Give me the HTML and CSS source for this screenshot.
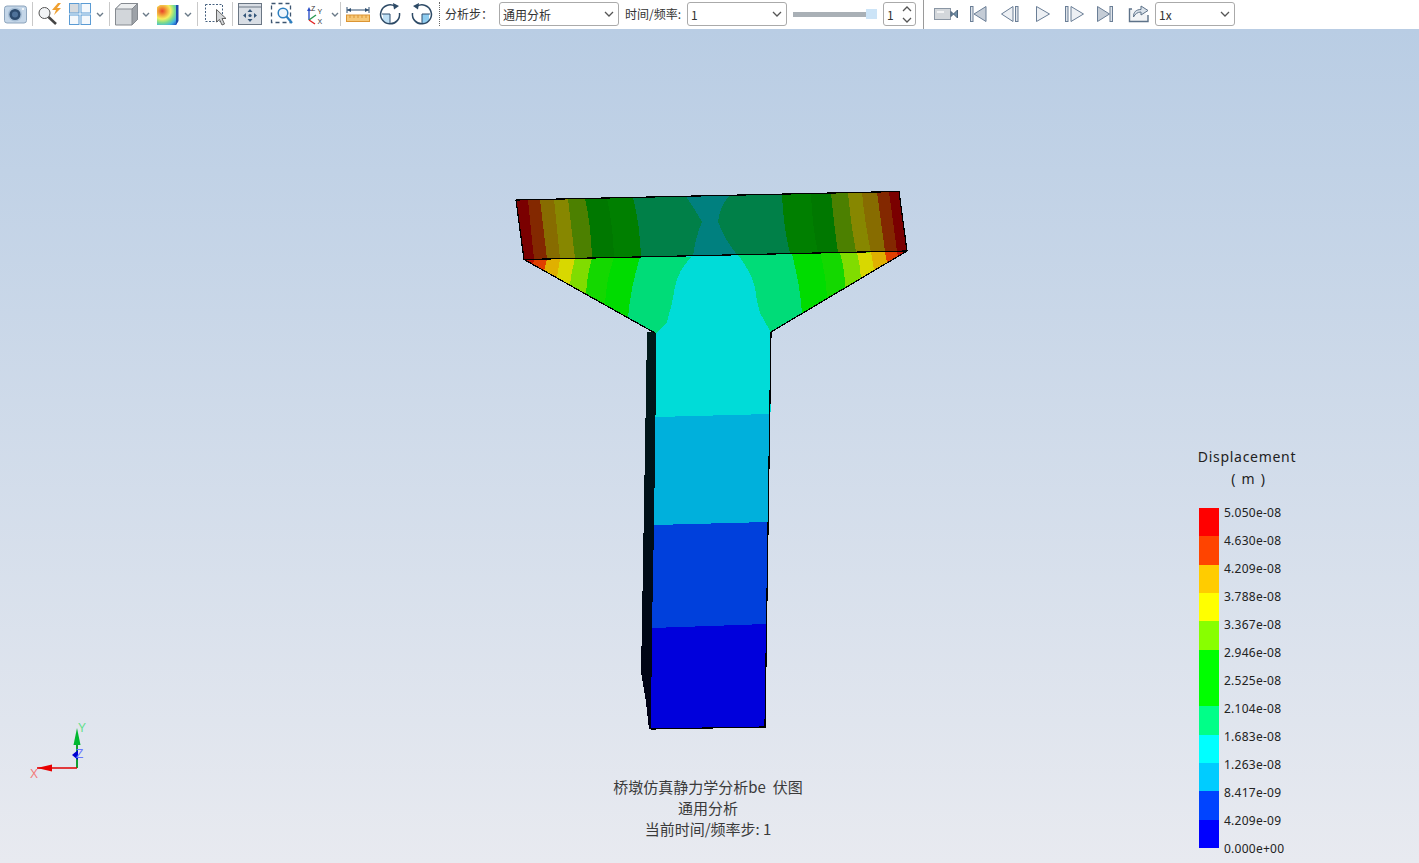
FILE: index.html
```html
<!DOCTYPE html>
<html lang="zh-CN">
<head>
    <meta charset="UTF-8">
    <title>桥墩仿真静力学分析</title>
    <link rel="stylesheet" href="styles.css">
</head>
<body>
    <div class="toolbar">
        <svg class="ico" viewBox="0 0 24 24"><rect x="1.5" y="4" width="22" height="17" rx="2.5" fill="#c4d6e8" stroke="#8ea5bd"/><circle cx="12" cy="12.5" r="7" fill="#a8bfd6"/><circle cx="12" cy="12.5" r="5.5" fill="#2c4a6c"/><circle cx="12" cy="12.5" r="3" fill="#4f7299"/><circle cx="20" cy="7" r="1" fill="#fff"/></svg>
        <div class="sep"></div>
        <svg class="ico" viewBox="0 0 24 24"><circle cx="6.5" cy="11" r="5.5" fill="#f2f4f6" stroke="#555"/><path d="M10.5 15L18 22" stroke="#444" stroke-width="2.5"/><path d="M20 1L14 8H18L16 13L23 6H19L23 1Z" fill="#f0a030"/></svg>
        <svg class="ico gap6" viewBox="0 0 24 24"><rect x="1.5" y="1.5" width="9.5" height="9.5" fill="#d6dade" stroke="#5a9bd4"/><rect x="13" y="1.5" width="9.5" height="9.5" fill="#f4f8fc" stroke="#5a9bd4"/><rect x="1.5" y="13" width="9.5" height="9.5" fill="#f4f8fc" stroke="#5a9bd4"/><rect x="13" y="13" width="9.5" height="9.5" fill="#f4f8fc" stroke="#5a9bd4"/></svg>
        <svg class="chev" viewBox="0 0 8 5"><path d="M1 1L4 4L7 1" fill="none" stroke="#6a7a88" stroke-width="1.4"/></svg>
        <div class="sep"></div>
        <svg class="ico-cube" viewBox="0 0 23 24"><path d="M0.5 7L6 1.5H22.5V17.5L17 23H0.5Z" fill="#d2d6da" stroke="#858a90"/><path d="M0.5 7L6 1.5H22.5L17 7Z" fill="#eceeef" stroke="#858a90"/><path d="M17 7L22.5 1.5V17.5L17 23Z" fill="#9da2a8" stroke="#858a90"/></svg>
        <svg class="chev" viewBox="0 0 8 5"><path d="M1 1L4 4L7 1" fill="none" stroke="#6a7a88" stroke-width="1.4"/></svg>
        <svg class="ico gap6" viewBox="0 0 24 24"><defs><radialGradient id="cmap" cx="0.25" cy="0.3" r="0.95"><stop offset="0" stop-color="#e8402a"/><stop offset="0.22" stop-color="#f2a23a"/><stop offset="0.42" stop-color="#f5ee60"/><stop offset="0.62" stop-color="#7fdc8a"/><stop offset="0.8" stop-color="#45b8e0"/><stop offset="1" stop-color="#1c50c8"/></radialGradient></defs><path d="M1 5L4 3H22V19L20 23H1Z" fill="url(#cmap)"/><path d="M20 3H22.5V19L20 23Z" fill="#1e4aa8"/></svg>
        <svg class="chev" viewBox="0 0 8 5"><path d="M1 1L4 4L7 1" fill="none" stroke="#6a7a88" stroke-width="1.4"/></svg>
        <div class="sep"></div>
        <svg class="ico" viewBox="0 0 24 24"><rect x="2.5" y="2.5" width="17" height="17" fill="none" stroke="#45607f" stroke-dasharray="2 1.5"/><path d="M13.5 7.5V20L16.5 17.5L19 23L21.5 22L19 16.5H23Z" fill="#d4d6d8" stroke="#555" stroke-width="0.9"/></svg>
        <div class="sep"></div>
        <svg class="ico" viewBox="0 0 24 24"><rect x="0.5" y="1.5" width="23" height="21" fill="#d9dee5" stroke="#6a7684"/><path d="M0.5 5H23.5" stroke="#6a7684"/><g fill="#35567a"><circle cx="12" cy="13.5" r="1.6"/><path d="M12 7L9.5 10H14.5Z"/><path d="M12 20L9.5 17H14.5Z"/><path d="M5 13.5L8 11V16Z"/><path d="M19 13.5L16 11V16Z"/></g></svg>
        <svg class="ico gap8" viewBox="0 0 24 24"><rect x="1.5" y="1.5" width="19" height="19" fill="none" stroke="#3c5570" stroke-width="1.3" stroke-dasharray="4 3"/><circle cx="13" cy="11" r="4.8" fill="#eef5fb" stroke="#2d7fc0" stroke-width="1.5"/><path d="M16.5 14.5L22 21" stroke="#2d7fc0" stroke-width="2.2"/></svg>
        <svg class="ico gap8" viewBox="0 0 24 24"><path d="M7 18V8" stroke="#2b4fc8" stroke-width="1.4"/><path d="M7 18L14 13" stroke="#2a9a50" stroke-width="1.4"/><path d="M7 18L13 22" stroke="#e02020" stroke-width="1.4"/><path d="M7 5L5 9H9Z" fill="#2b4fc8"/><text class="axis-mini" x="9" y="9">Z</text><text class="axis-mini" x="15.5" y="12">Y</text><text class="axis-mini" x="15.5" y="22">X</text></svg>
        <svg class="chev chev-last" viewBox="0 0 8 5"><path d="M1 1L4 4L7 1" fill="none" stroke="#6a7a88" stroke-width="1.4"/></svg>
        <div class="sep sep-tight"></div>
        <svg class="ico" viewBox="0 0 24 24"><path d="M1 5V11M23 5V11M1 8H23" stroke="#2f4f70" fill="none"/><path d="M1 8L5 6V10ZM23 8L19 6V10Z" fill="#2f4f70"/><rect x="0.5" y="13" width="23" height="6.5" fill="#f6c878" stroke="#dc9534"/><path d="M4 13V16M8 13V16M12 13V16M16 13V16M20 13V16" stroke="#dc9534"/></svg>
        <svg class="ico gap8" viewBox="0 0 24 24"><path d="M5 18V12H12V21.5A9.7 9.7 0 0 1 5 18Z" fill="#bfe0f5"/><path d="M12 12V21M4 12H12" stroke="#2f4f70" fill="none"/><path d="M17 4.2A9.5 9.5 0 1 0 21.5 11" fill="none" stroke="#2d4a66" stroke-width="1.5"/><path d="M15 1L21 4L16 7.5Z" fill="#2d4a66"/></svg>
        <svg class="ico gap8" viewBox="0 0 24 24"><path d="M19 18V12H12V21.5A9.7 9.7 0 0 0 19 18Z" fill="#8fcdf0"/><path d="M12 12V21M20 12H12" stroke="#2f4f70" fill="none"/><path d="M7 4.2A9.5 9.5 0 1 1 2.5 11" fill="none" stroke="#2d4a66" stroke-width="1.5"/><path d="M9 1L3 4L8 7.5Z" fill="#2d4a66"/></svg>
        <div class="sep sep-dotted"></div>
        <span class="tool-label step-label">分析步：</span>
        <div class="combo combo-step"><span>通用分析</span><svg class="combo-arrow" viewBox="0 0 10 6"><path d="M1 1L5 5L9 1" fill="none" stroke="#555" stroke-width="1.3"/></svg></div>
        <span class="tool-label freq-label">时间/频率:</span>
        <div class="combo combo-freq"><span>1</span><svg class="combo-arrow" viewBox="0 0 10 6"><path d="M1 1L5 5L9 1" fill="none" stroke="#555" stroke-width="1.3"/></svg></div>
        <div class="slider"><div class="slider-track"></div><div class="slider-thumb"></div></div>
        <div class="spin"><span>1</span><div class="spin-arrows"><svg viewBox="0 0 10 6"><path d="M1 5L5 1L9 5" fill="none" stroke="#555" stroke-width="1.3"/></svg><svg viewBox="0 0 10 6"><path d="M1 1L5 5L9 1" fill="none" stroke="#555" stroke-width="1.3"/></svg></div></div>
        <div class="sep sep-dark"></div>
        <svg class="ico" viewBox="0 0 24 24"><rect x="0.5" y="6.5" width="16" height="11" fill="#d3d7db" stroke="#8a96a4"/><rect x="3" y="9" width="7" height="2" fill="#f2f3f4"/><path d="M17 9.5L19.5 12L17 14.5ZM23.5 8V16L19.5 12Z" fill="#6f8fa8" stroke="#4c6278"/></svg>
        <svg class="ico gap8" viewBox="0 0 24 24"><rect x="4.5" y="4.5" width="2.5" height="15" fill="#dfe4ea" stroke="#6a7e96"/><path d="M20 4.5V19.5L8 12Z" fill="#c4ccd6" stroke="#6a7e96"/></svg>
        <svg class="ico gap8" viewBox="0 0 24 24"><path d="M15 4.5V19.5L3.5 12Z" fill="#edf0f4" stroke="#6a7e96"/><rect x="17.5" y="4.5" width="2.5" height="15" fill="#dfe4ea" stroke="#6a7e96"/></svg>
        <svg class="ico gap8" viewBox="0 0 24 24"><path d="M6.5 4.5V19.5L19.5 12Z" fill="#edf0f4" stroke="#6a7e96"/></svg>
        <svg class="ico gap8" viewBox="0 0 24 24"><rect x="3.5" y="4.5" width="2.5" height="15" fill="#dfe4ea" stroke="#6a7e96"/><path d="M9 4.5V19.5L21.5 12Z" fill="#edf0f4" stroke="#6a7e96"/></svg>
        <svg class="ico gap8" viewBox="0 0 24 24"><path d="M3.5 4.5V19.5L15.5 12Z" fill="#c4ccd6" stroke="#6a7e96"/><rect x="16" y="4.5" width="2.5" height="15" fill="#dfe4ea" stroke="#6a7e96"/></svg>
        <svg class="ico gap8" viewBox="0 0 24 24"><path d="M6 7H3.5V19.5H22V13" fill="#f2f4f6" stroke="#5d7289" stroke-width="1.4"/><path d="M7.5 15C7.5 10 10 7.5 15 7.5V4L22 8.5L15 13V10C11.5 10 9 12 7.5 15Z" fill="#dbe3eb" stroke="#5d7289"/></svg>
        <div class="combo combo-speed"><span>1x</span><svg class="combo-arrow" viewBox="0 0 10 6"><path d="M1 1L5 5L9 1" fill="none" stroke="#555" stroke-width="1.3"/></svg></div>
    </div>

    <div class="stage">
        <svg class="scene" viewBox="0 29 1419 834" shape-rendering="crispEdges">
            <defs>
                <linearGradient id="side" x1="0" y1="0" x2="0" y2="1"><stop offset="0" stop-color="#001a1a"/><stop offset="0.45" stop-color="#001018"/><stop offset="1" stop-color="#000014"/></linearGradient>
            </defs>

            <!-- side face of the pier -->
            <polygon points="647,332 657,332 652,729 649,729 646,702 641,672 642,620" fill="url(#side)"/>

            <!-- pier column -->
            <polygon points="656,332 771,332 770.5,414 655.5,417" fill="#00dcd8"/>
            <polygon points="655.5,417 770.5,414 768.5,522 654,525" fill="#00b0dc"/>
            <polygon points="654,525 768.5,522 767,624 652,628" fill="#0040dc"/>
            <polygon points="652,628 767,624 765,727 651,729" fill="#0000dc"/>

            <!-- flange, lower part of cap -->
            <polygon points="524,259.5 907,251 771,332 655,333" fill="#00dcd8"/>
            <path d="M524,259.5 L692,256.5 Q678,270 675,287 Q672,305 667,322 L656,333.7 Z" fill="#00dc78"/>
            <path d="M524,259.5 L640,257 Q630,290 628,318 Z" fill="#00dc00"/>
            <path d="M524,259.5 L614,257.5 Q606,280 605,305 Z" fill="#14d800"/>
            <path d="M524,259.5 L592,258 Q587,275 586,294 Z" fill="#80dc00"/>
            <path d="M524,259.5 L575,258.4 Q571,272 570,285 Z" fill="#d8d800"/>
            <path d="M524,259.5 L560,258.7 L557,277 Z" fill="#e0b000"/>
            <path d="M524,259.5 L547,259 L544,271 Z" fill="#e04000"/>
            <path d="M524,259.5 L534,259.3 L533,264.5 Z" fill="#c01000"/>

            <path d="M907,251 L738,255 Q750,270 755,287 Q756,300 760,313 L771,332.6 Z" fill="#00dc78"/>
            <path d="M907,251 L792,254 Q800,285 802,313 Z" fill="#00dc00"/>
            <path d="M907,251 L820,253 Q826,275 827,298 Z" fill="#14d800"/>
            <path d="M907,251 L840,253 Q845,270 845,287 Z" fill="#80dc00"/>
            <path d="M907,251 L857,253 Q860,265 861,278 Z" fill="#d8d800"/>
            <path d="M907,251 L871,252 L874,270 Z" fill="#e0b000"/>
            <path d="M907,251 L885,252 L887,263 Z" fill="#e04000"/>
            <path d="M907,251 L897,251.2 L898,256 Z" fill="#c01000"/>

            <!-- top band of cap -->
            <polygon points="516,200 899,191.5 907,251 524,259.5" fill="#00807f"/>
            <path d="M516,200 L686,196.2 Q694,208 702,222 Q696,235 693,256 L524,259.5 Z" fill="#008048"/>
            <path d="M516,200 L633,197.4 Q640,225 641,257 L524,259.5 Z" fill="#007f00"/>
            <path d="M516,200 L607,198 Q613,225 614,257.6 L524,259.5 Z" fill="#007800"/>
            <path d="M516,200 L585,198.5 Q591,225 592,258 L524,259.5 Z" fill="#4c8000"/>
            <path d="M516,200 L568,198.8 L575,258.4 L524,259.5 Z" fill="#878700"/>
            <path d="M516,200 L554,199.2 L560,258.7 L524,259.5 Z" fill="#876c00"/>
            <path d="M516,200 L540,199.5 L547,259 L524,259.5 Z" fill="#832800"/>
            <path d="M516,200 L528,199.7 L534,259.3 L524,259.5 Z" fill="#7a0000"/>

            <path d="M899,191.5 L730,195.2 Q720,205 718,222 Q725,240 737,254.5 L907,251 Z" fill="#008048"/>
            <path d="M899,191.5 L782,194.2 Q783,225 790,253.7 L907,251 Z" fill="#007f00"/>
            <path d="M899,191.5 L811,193.5 Q812,225 818,253 L907,251 Z" fill="#007800"/>
            <path d="M899,191.5 L831,193 Q834,225 838,252.5 L907,251 Z" fill="#4c8000"/>
            <path d="M899,191.5 L848,192.6 Q851,225 856,252.2 L907,251 Z" fill="#878700"/>
            <path d="M899,191.5 L862,192.3 Q865,225 871,252 L907,251 Z" fill="#876c00"/>
            <path d="M899,191.5 L877,192 L885,251.5 L907,251 Z" fill="#832800"/>
            <path d="M899,191.5 L889,191.7 L897,251.2 L907,251 Z" fill="#7a0000"/>

            <!-- edges -->
            <g fill="none" stroke="#000" stroke-width="1.2">
                <path d="M516,200 L899,191.5 L907,251 L771,332 L765,727 L651,729 M516,200 L524,259.5 L655,333"/>
                <path d="M524,259.5 L907,251"/>
            </g>

            <!-- axis triad -->
            <g shape-rendering="auto">
                <path d="M77,768V745" stroke="#10a030" stroke-width="2"/>
                <path d="M37,768H77" stroke="#e00000" stroke-width="1.5"/>
                <path d="M77,728L73.5,745H80.5Z" fill="#00b830"/>
                <path d="M37,768L52,764.5V771.5Z" fill="#e80000"/>
                <path d="M72,755L78,750V760Z" fill="#0000d0"/>
                <text class="axis-y" x="78" y="732">Y</text>
                <text class="axis-z" x="76" y="758">Z</text>
                <text class="axis-x" x="30" y="778">X</text>
            </g>
        </svg>

        <div class="legend">
            <div class="legend-title">Displacement</div>
            <div class="legend-unit">( m )</div>
            <div class="legend-body">
                <div class="legend-bar">
                    <div class="swatch s-red"></div>
                    <div class="swatch s-orange"></div>
                    <div class="swatch s-amber"></div>
                    <div class="swatch s-yellow"></div>
                    <div class="swatch s-lime"></div>
                    <div class="swatch s-green"></div>
                    <div class="swatch s-green"></div>
                    <div class="swatch s-mint"></div>
                    <div class="swatch s-cyan"></div>
                    <div class="swatch s-sky"></div>
                    <div class="swatch s-azure"></div>
                    <div class="swatch s-blue"></div>
                </div>
                <div class="legend-labels">
                    <div>5.050e-08</div>
                    <div>4.630e-08</div>
                    <div>4.209e-08</div>
                    <div>3.788e-08</div>
                    <div>3.367e-08</div>
                    <div>2.946e-08</div>
                    <div>2.525e-08</div>
                    <div>2.104e-08</div>
                    <div>1.683e-08</div>
                    <div>1.263e-08</div>
                    <div>8.417e-09</div>
                    <div>4.209e-09</div>
                    <div>0.000e+00</div>
                </div>
            </div>
        </div>

        <div class="caption">
            <div>桥墩仿真静力学分析be&nbsp;&nbsp;伏图</div>
            <div>通用分析</div>
            <div>当前时间/频率步: 1</div>
        </div>
    </div>
</body>
</html>
```

FILE: styles.css
```css
* {
    margin: 0;
    padding: 0;
    box-sizing: border-box;
}

html, body {
    width: 100%;
    height: 100%;
    overflow: hidden;
}

body {
    font-family: "Noto Sans CJK SC", "Noto Sans", sans-serif;
    color: #333;
    display: flex;
    flex-direction: column;
}

.toolbar {
    display: flex;
    align-items: center;
    height: 29px;
    padding: 0 0 1px 3px;
    background: #fff;
    flex-shrink: 0;
    font-size: 12px;
}

.ico {
    width: 24px;
    height: 24px;
    flex-shrink: 0;
}

.ico-cube {
    width: 23px;
    height: 24px;
    flex-shrink: 0;
}

.gap6 {
    margin-left: 6px;
}

.gap8 {
    margin-left: 8px;
}

.chev {
    width: 8px;
    height: 5px;
    margin-left: 4px;
    flex-shrink: 0;
}

.chev-last {
    margin-left: 5px;
}

.sep {
    width: 1px;
    height: 24px;
    margin: 0 5px;
    background: #c9c9c9;
    flex-shrink: 0;
}

.sep-tight {
    margin-left: 1px;
}

.sep-dotted {
    background: none;
    border-left: 1px dotted #666;
}

.sep-dark {
    height: 29px;
    margin: 0 10px 0 7px;
    background: #9a9a9a;
}

.axis-mini {
    font: 7px "Liberation Sans", sans-serif;
    fill: #333;
}

.tool-label {
    line-height: 24px;
    white-space: nowrap;
    flex-shrink: 0;
}

.step-label {
    width: 54px;
}

.freq-label {
    width: 56px;
    margin-left: 6px;
}

.combo {
    display: flex;
    align-items: center;
    justify-content: space-between;
    height: 24px;
    padding: 0 4px 0 3px;
    background: #fff;
    border: 1px solid #aaa;
    border-radius: 3px;
    flex-shrink: 0;
}

.combo-step {
    width: 120px;
}

.combo-freq {
    width: 100px;
    margin-left: 6px;
}

.combo-speed {
    width: 80px;
    margin-left: 5px;
}

.combo-arrow {
    width: 10px;
    height: 6px;
}

.slider {
    display: flex;
    align-items: center;
    width: 84px;
    height: 12px;
    margin-left: 6px;
    flex-shrink: 0;
}

.slider-track {
    width: 73px;
    height: 5px;
    background: #a9b0b6;
}

.slider-thumb {
    width: 11px;
    height: 10px;
    background: #cce4f7;
}

.spin {
    display: flex;
    align-items: center;
    justify-content: space-between;
    width: 33px;
    height: 24px;
    margin-left: 6px;
    padding: 0 3px;
    border: 1px solid #aaa;
    border-radius: 3px;
    flex-shrink: 0;
}

.spin-arrows {
    display: flex;
    flex-direction: column;
    gap: 5px;
}

.spin-arrows svg {
    display: block;
    width: 10px;
    height: 6px;
}

.stage {
    position: relative;
    flex: 1;
    background: linear-gradient(180deg, #b9cde4 0%, #e8eaf0 100%);
}

.scene {
    position: absolute;
    top: 0;
    left: 0;
    width: 100%;
    height: 100%;
}

.axis-x,
.axis-y,
.axis-z {
    font: 12px "Liberation Sans", sans-serif;
}

.axis-x {
    fill: #f27a7a;
}

.axis-y {
    fill: #63e08a;
}

.axis-z {
    fill: #6a78ff;
}

.legend {
    position: absolute;
    top: 417px;
    left: 1190px;
    width: 114px;
    color: #222;
}

.legend-title,
.legend-unit {
    font-family: "Noto Sans", sans-serif;
    font-size: 14px;
    line-height: 22px;
    letter-spacing: 0.7px;
    text-align: center;
}

.legend-unit {
    word-spacing: 1px;
    padding-left: 3px;
}

.legend-body {
    display: flex;
    gap: 5px;
    margin-top: 8.5px;
    padding-left: 9px;
}

.legend-bar {
    display: flex;
    flex-direction: column;
    width: 20px;
    height: 340px;
    margin-top: 9.5px;
}

.swatch {
    flex: 1;
}

.s-red { background: #ff0000; }
.s-orange { background: #ff4400; }
.s-amber { background: #ffcc00; }
.s-yellow { background: #ffff00; }
.s-lime { background: #88ff00; }
.s-green { background: #00ff00; }
.s-mint { background: #00ff88; }
.s-cyan { background: #00ffff; }
.s-sky { background: #00ccff; }
.s-azure { background: #0044ff; }
.s-blue { background: #0000ff; }

.legend-labels {
    font-family: "Noto Sans", sans-serif;
    font-size: 12px;
    line-height: 28px;
    letter-spacing: 0.25px;
    white-space: nowrap;
}

.caption {
    position: absolute;
    left: 508px;
    bottom: 24.5px;
    width: 400px;
    font-size: 15px;
    line-height: 21px;
    text-align: center;
    color: #3a3a3a;
}
```
